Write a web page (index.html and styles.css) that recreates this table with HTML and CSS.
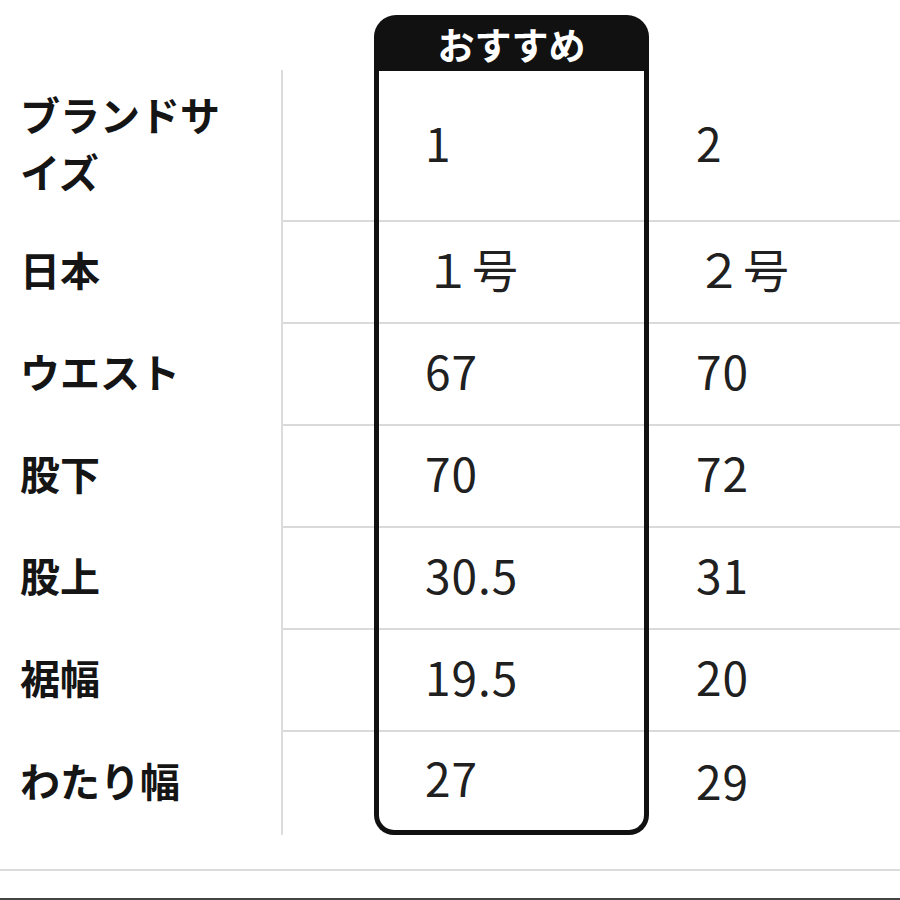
FILE: index.html
```html
<!DOCTYPE html>
<html lang="ja">
<head>
<meta charset="utf-8">
<title>サイズ表</title>
<link rel="stylesheet" href="styles.css">
</head>
<body>
<div class="sheet">
  <div class="row head">
    <div class="label"></div>
    <div class="gap"></div>
    <div class="pick-head">おすすめ</div>
    <div class="v2"></div>
  </div>
  <div class="row first">
    <div class="label">ブランドサ<br>イズ</div>
    <div class="gap"></div>
    <div class="v1">1</div>
    <div class="v2">2</div>
  </div>
  <div class="row line">
    <div class="label">日本</div>
    <div class="gap"></div>
    <div class="v1">１号</div>
    <div class="v2">２号</div>
  </div>
  <div class="row line">
    <div class="label">ウエスト</div>
    <div class="gap"></div>
    <div class="v1">67</div>
    <div class="v2">70</div>
  </div>
  <div class="row line">
    <div class="label">股下</div>
    <div class="gap"></div>
    <div class="v1">70</div>
    <div class="v2">72</div>
  </div>
  <div class="row line">
    <div class="label">股上</div>
    <div class="gap"></div>
    <div class="v1">30.5</div>
    <div class="v2">31</div>
  </div>
  <div class="row line">
    <div class="label">裾幅</div>
    <div class="gap"></div>
    <div class="v1">19.5</div>
    <div class="v2">20</div>
  </div>
  <div class="row line last">
    <div class="label">わたり幅</div>
    <div class="gap"></div>
    <div class="v1">27</div>
    <div class="v2">29</div>
  </div>
  <div class="foot-rule"></div>
  <div class="foot-dark"></div>
</div>
</body>
</html>
```

FILE: styles.css
```css
html, body {
  margin: 0;
  padding: 0;
  background: #ffffff;
}

body {
  width: 900px;
  height: 900px;
  overflow: hidden;
  font-family: "Noto Sans CJK JP", "Noto Sans", sans-serif;
  color: #161616;
}

.sheet {
  display: flex;
  flex-direction: column;
  height: 900px;
}

.row {
  display: grid;
  grid-template-columns: 283px 91px 275px 1fr;
  height: 102px;
}

.row.line {
  background-image: linear-gradient(#dadada, #dadada);
  background-repeat: no-repeat;
  background-position: 283px 0;
  background-size: calc(100% - 283px) 2px;
}

.row.head {
  height: 70px;
}

.row.first {
  height: 150px;
}

.row.last {
  height: 105px;
}

.label {
  display: flex;
  align-items: center;
  padding-left: 20px;
  padding-bottom: 4px;
  font-size: 40px;
  font-weight: 700;
  line-height: 57px;
  color: #151515;
  border-right: 2px solid #dcdcdc;
}

.head .label {
  border-right-color: transparent;
}

.pick-head {
  margin-top: 15px;
  background: #111111;
  border-radius: 22px 22px 0 0;
  color: #ffffff;
  font-size: 37px;
  font-weight: 700;
  display: flex;
  align-items: center;
  justify-content: center;
  padding-top: 2px;
}

.v1, .v2 {
  display: flex;
  align-items: center;
  padding-bottom: 6px;
  font-size: 46px;
  font-weight: 400;
  color: #202020;
  letter-spacing: 1px;
}

.v1 {
  border-left: 5px solid #111111;
  border-right: 5px solid #111111;
  padding-left: 46px;
}

.v2 {
  padding-left: 47px;
}

.last .v1 {
  border-bottom: 5px solid #111111;
  border-radius: 0 0 20px 20px;
}

.foot-rule {
  margin-top: 34px;
  height: 2px;
  background: #dcdcdc;
}

.foot-dark {
  margin-top: 27px;
  height: 2px;
  background: #444444;
}
```
